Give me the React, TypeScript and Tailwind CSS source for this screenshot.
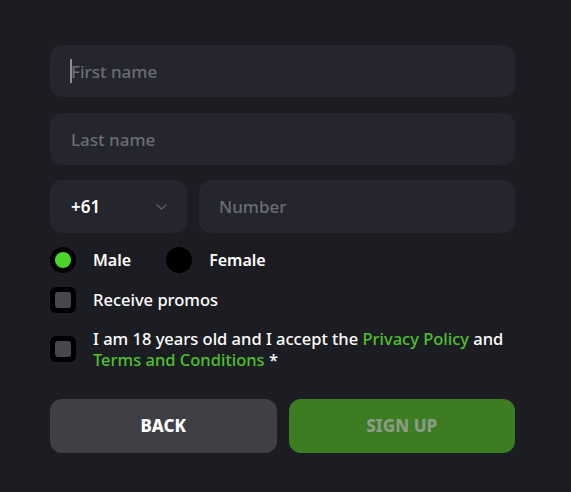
import { useState } from "react";

const font = { fontFamily: "'Noto Sans', Lato, sans-serif" };

const Chevron = () => (
  <svg width="11" height="6" viewBox="0 0 11 6" fill="none">
    <path d="M1 1l4.5 4L10 1" stroke="#5d5e68" strokeWidth="1.4" strokeLinecap="round" strokeLinejoin="round" />
  </svg>
);

const Radio = ({ checked, label, onClick }: { checked: boolean; label: string; onClick: () => void }) => (
  <button type="button" onClick={onClick} className="flex items-center gap-[17px]">
    <span className="flex h-[26px] w-[26px] items-center justify-center rounded-full bg-black">
      {checked && <span className="h-[16px] w-[16px] rounded-full bg-[#4cd629]" />}
    </span>
    <span className="text-[16px] font-semibold text-white">{label}</span>
  </button>
);

const Checkbox = ({ checked, onClick }: { checked: boolean; onClick: () => void }) => (
  <button
    type="button"
    onClick={onClick}
    className="flex h-[26px] w-[26px] shrink-0 items-center justify-center rounded-[6px] bg-black"
  >
    <span className={`h-[16px] w-[16px] rounded-[3px] ${checked ? "bg-[#4cd629]" : "bg-[#47484e]"}`} />
  </button>
);

export default function App() {
  const [gender, setGender] = useState("male");
  const [promos, setPromos] = useState(false);
  const [terms, setTerms] = useState(false);

  return (
    <main className="min-h-screen bg-[#1c1d22] pl-[50px] pt-[45px]" style={font}>
      <form className="flex w-[465px] flex-col" onSubmit={(e) => e.preventDefault()}>
        <div className="relative">
          <input
            placeholder="First name"
            className="h-[52px] w-full rounded-xl bg-[#24252d] px-[21px] text-[17px] font-medium text-white outline-none placeholder:text-[#6b6c76]"
          />
          <span className="pointer-events-none absolute left-[20px] top-[14px] h-[24px] w-[2px] bg-[#8a8b93]" />
        </div>
        <input
          placeholder="Last name"
          className="mt-4 h-[52px] w-full rounded-xl bg-[#24252d] px-[21px] text-[17px] font-medium text-white outline-none placeholder:text-[#6b6c76]"
        />
        <div className="mt-[15px] flex gap-3">
          <div className="flex h-[53px] w-[137px] items-center justify-between rounded-xl bg-[#24252d] pl-[21px] pr-[20px]">
            <span className="text-[17px] font-semibold text-white">+61</span>
            <Chevron />
          </div>
          <input
            placeholder="Number"
            className="h-[53px] flex-1 rounded-xl bg-[#24252d] px-[20px] text-[17px] font-medium text-white outline-none placeholder:text-[#6b6c76]"
          />
        </div>

        <div className="mt-[14px] flex items-center gap-[35px]">
          <Radio checked={gender === "male"} label="Male" onClick={() => setGender("male")} />
          <Radio checked={gender === "female"} label="Female" onClick={() => setGender("female")} />
        </div>

        <div className="mt-[14px] flex items-center gap-[17px]">
          <Checkbox checked={promos} onClick={() => setPromos(!promos)} />
          <span className="text-[16.5px] font-medium text-white">Receive promos</span>
        </div>

        <div className="mt-[15px] flex items-center gap-[17px]">
          <Checkbox checked={terms} onClick={() => setTerms(!terms)} />
          <p className="text-[16.5px] font-medium leading-[21px] text-white">
            I am 18 years old and I accept the <a className="text-[#4cc22a]">Privacy Policy</a> and
            <br />
            <a className="text-[#4cc22a]">Terms and Conditions</a> *
          </p>
        </div>

        <div className="mt-[29px] flex gap-3">
          <button type="button" className="h-[54px] flex-1 rounded-xl bg-[#3f4046] text-[17px] font-extrabold text-white">
            BACK
          </button>
          <button type="submit" className="h-[54px] flex-1 rounded-xl bg-[#3b7d20] text-[17px] font-extrabold text-[#8c9a88]">
            SIGN UP
          </button>
        </div>
      </form>
    </main>
  );
}
